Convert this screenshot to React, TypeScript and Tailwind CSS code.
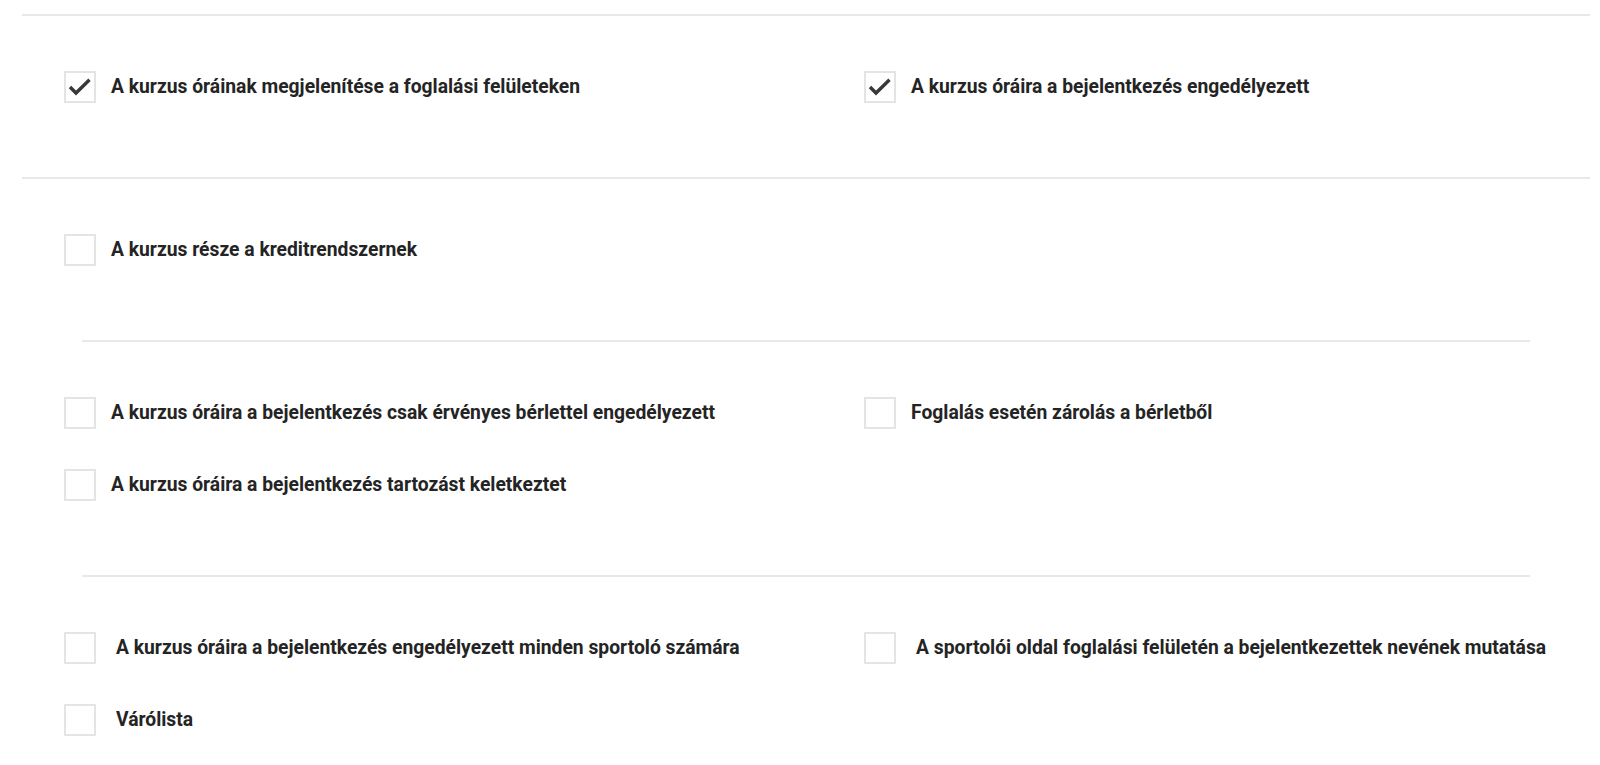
import React, { useState } from 'react';

type Item = { id: string; label: string; checked?: boolean; wide?: boolean };

const Checkbox = ({ item }: { item: Item }) => {
  const [checked, setChecked] = useState(!!item.checked);
  return (
    <label className="flex items-center cursor-pointer select-none">
      <span
        onClick={() => setChecked(!checked)}
        className="relative h-[32px] w-[32px] shrink-0 border-2 border-[#e4e4e4] bg-white"
      >
        {checked && (
          <svg
            className="absolute -left-[2px] -top-[2px]"
            width="32"
            height="32"
            viewBox="0 0 32 32"
            fill="none"
            stroke="#383838"
            strokeWidth="3.4"
          >
            <polyline points="6,16 12,22 25.5,8.8" />
          </svg>
        )}
      </span>
      <span
        className={
          (item.wide ? 'ml-[20px]' : 'ml-[15px]') +
          ' text-[19.3px] font-bold text-[#242424] whitespace-nowrap'
        }
      >
        {item.label}
      </span>
    </label>
  );
};

const Section = ({ rows }: { rows: Item[][] }) => (
  <div className="flex flex-col gap-y-[40px] pt-[55px] pb-[74px] pl-[42px]">
    {rows.map((row, i) => (
      <div key={i} className="grid grid-cols-[800px_1fr]">
        {row.map((item) => (
          <Checkbox key={item.id} item={item} />
        ))}
      </div>
    ))}
  </div>
);

export default function App() {
  return (
    <div className="min-h-screen bg-white pt-[14px]" style={{ fontFamily: 'Roboto, "Noto Sans", sans-serif' }}>
      <div className="ml-[22px] mr-[10px]">
        <div className="h-[2px] bg-[#e8e8e8]" />
        <Section
          rows={[
            [
              { id: 'show', label: 'A kurzus óráinak megjelenítése a foglalási felületeken', checked: true },
              { id: 'allow', label: 'A kurzus óráira a bejelentkezés engedélyezett', checked: true },
            ],
          ]}
        />
        <div className="h-[2px] bg-[#e8e8e8]" />
        <Section rows={[[{ id: 'credit', label: 'A kurzus része a kreditrendszernek' }]]} />
        <div className="mx-[60px] h-[2px] bg-[#e8e8e8]" />
        <Section
          rows={[
            [
              { id: 'pass', label: 'A kurzus óráira a bejelentkezés csak érvényes bérlettel engedélyezett' },
              { id: 'lock', label: 'Foglalás esetén zárolás a bérletből' },
            ],
            [{ id: 'debt', label: 'A kurzus óráira a bejelentkezés tartozást keletkeztet' }],
          ]}
        />
        <div className="mx-[60px] h-[2px] bg-[#e8e8e8]" />
        <Section
          rows={[
            [
              { id: 'all', label: 'A kurzus óráira a bejelentkezés engedélyezett minden sportoló számára', wide: true },
              { id: 'names', label: 'A sportolói oldal foglalási felületén a bejelentkezettek nevének mutatása', wide: true },
            ],
            [{ id: 'wait', label: 'Várólista', wide: true }],
          ]}
        />
      </div>
    </div>
  );
}
